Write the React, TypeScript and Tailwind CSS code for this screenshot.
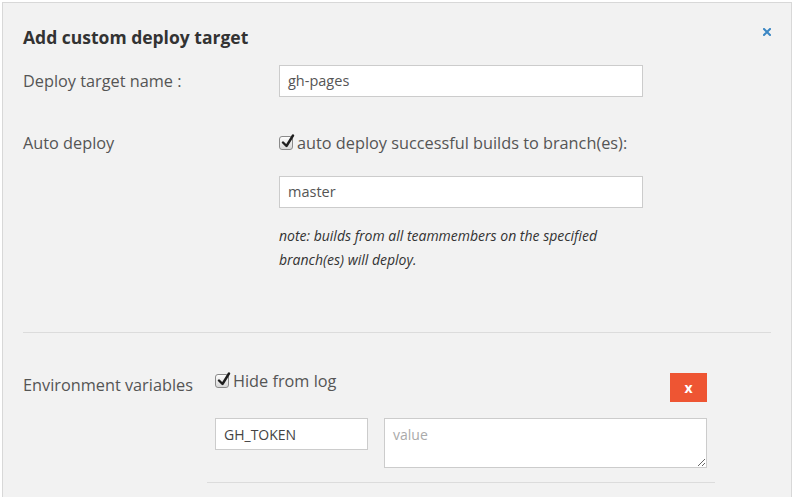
import React from "react";

function Check() {
  return (
    <span className="relative inline-block w-[14px] h-[14px] rounded-[3px] border border-[#8a8a8a] bg-gradient-to-b from-[#fdfdfd] to-[#d8d8d8] shrink-0">
      <svg className="absolute left-[1px] top-[-3px]" width="14" height="15" viewBox="0 0 14 15">
        <path d="M2 8.5 L5.5 12 L12 1.5" fill="none" stroke="#1e1e1e" strokeWidth="2.4" strokeLinecap="round" strokeLinejoin="round" />
      </svg>
    </span>
  );
}

export default function App() {
  return (
    <div className="w-[794px] h-[497px] overflow-hidden bg-white" style={{ fontFamily: '"Open Sans", sans-serif' }}>
      <div className="ml-[2px] mt-[2px] w-[790px] h-[520px] border border-[#d8d8d8] bg-[#f2f2f2] px-[20px] pt-[22px] relative">
        <svg className="absolute left-[760px] top-[25px]" width="8" height="8" viewBox="0 0 8 8">
          <path d="M1 1 L7 7 M7 1 L1 7" stroke="#3b87c4" strokeWidth="2" strokeLinecap="square" />
        </svg>
        <h2 className="text-[17.5px] leading-[24px] font-bold text-[#333]">Add custom deploy target</h2>

        <div className="mt-[16px] flex items-center">
          <div className="w-[256px] text-[16.3px] text-[#555]">Deploy target name :</div>
          <div className="w-[364px] h-[32px] bg-white border border-[#cccccc] px-[8px] flex items-center text-[14.5px] text-[#555]">gh-pages</div>
        </div>

        <div className="mt-[34px] flex items-start">
          <div className="w-[256px] text-[16.3px] leading-[24px] text-[#555]">Auto deploy</div>
          <div>
            <div className="flex items-center gap-[4px] text-[16.3px] leading-[24px] text-[#555]">
              <Check />
              <span>auto deploy successful builds to branch(es):</span>
            </div>
            <div className="mt-[21px] w-[364px] h-[32px] bg-white border border-[#cccccc] px-[8px] flex items-center text-[14.5px] text-[#555]">master</div>
            <p className="mt-[16px] text-[14px] leading-[24px] italic text-[#333]">
              note: builds from all teammembers on the specified<br />branch(es) will deploy.
            </p>
          </div>
        </div>

        <div className="mt-[60px] border-t border-[#dcdcdc]" />

        <div className="mt-[36px] flex items-start">
          <div className="w-[184px] pt-[4px] text-[16.3px] leading-[24px] text-[#555]">Environment variables</div>
          <div className="w-[508px] px-[8px] pb-[14px] border-b border-[#dcdcdc]">
            <div className="flex items-start justify-between">
              <div className="flex items-center gap-[4px] text-[16.3px] leading-[24px] text-[#555]">
                <Check />
                <span>Hide from log</span>
              </div>
              <button className="mt-[4px] w-[37px] h-[29px] bg-[#ee5533] text-white text-[14px] font-bold leading-none flex items-center justify-center">x</button>
            </div>
            <div className="mt-[16px] flex items-start gap-[16px]">
              <div className="w-[153px] h-[32px] bg-white border border-[#cccccc] px-[8px] flex items-center text-[14px] text-[#444]">GH_TOKEN</div>
              <textarea
                placeholder="value"
                className="w-[323px] h-[50px] bg-white border border-[#cccccc] px-[8px] py-[5px] text-[14px] text-[#555] placeholder:text-[#aaa] outline-none"
                style={{ fontFamily: '"Open Sans", sans-serif' }}
              />
            </div>
          </div>
        </div>
      </div>
    </div>
  );
}
